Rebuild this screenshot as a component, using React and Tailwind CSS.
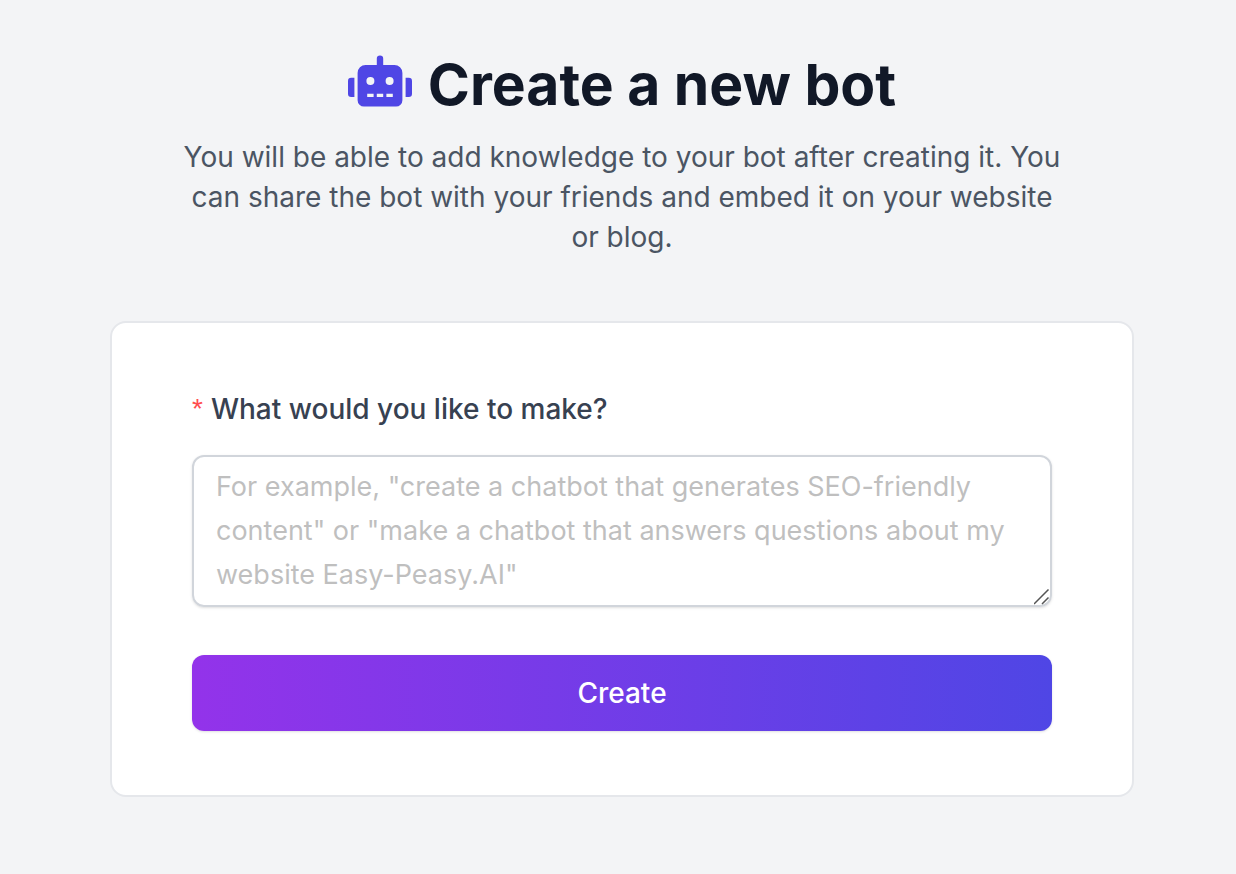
import { useState } from "react";
import { FaRobot } from "react-icons/fa";

const App = () => {
  const [prompt, setPrompt] = useState("");

  const handleSubmit = (e) => {
    e.preventDefault();
  };

  return (
    <div className="min-h-screen bg-gray-100 pt-[49px] pb-[77px] pl-[110px] pr-[102px] font-['Inter',sans-serif]">
      <header className="px-16 text-center">
        <h1 className="flex items-center justify-center gap-4 text-[57px] leading-[72px] font-bold text-[#111827]">
          <FaRobot className="mb-2 h-16 w-16 text-[#4f46e5]" />
          Create a new bot
        </h1>
        <p className="mt-4 text-[28px] leading-10 text-[#4b5563]">
          You will be able to add knowledge to your bot after creating it. You
          can share the bot with your friends and embed it on your website or
          blog.
        </p>
      </header>

      <form
        onSubmit={handleSubmit}
        className="mt-16 rounded-2xl border-2 border-[#e5e7eb] bg-white px-20 py-16"
      >
        <label
          htmlFor="prompt"
          className="flex gap-2 text-[28px] leading-[44px] font-medium text-[#374151]"
        >
          <span className="font-['Liberation_Sans',sans-serif] text-[#ff4d4f]">
            *
          </span>
          What would you like to make?
        </label>
        <div className="relative mt-6">
          <textarea
            id="prompt"
            rows={3}
            className="block w-full resize-y rounded-xl border-2 border-[#d1d5db] px-[22px] py-2 text-[27px] leading-[44px] text-[#374151] shadow-sm placeholder:text-[#bfbfbf] focus:outline-none [&::-webkit-resizer]:bg-transparent"
            value={prompt}
            onChange={(e) => setPrompt(e.target.value)}
            placeholder={
              'For example, "create a chatbot that generates SEO-friendly content" or "make a chatbot that answers questions about my website Easy-Peasy.AI"'
            }
          />
          {/* resize grip */}
          <svg
            className="pointer-events-none absolute right-0.5 bottom-0.5 h-4 w-4"
            viewBox="0 0 16 16"
            fill="none"
            stroke="#555"
            strokeWidth="1.5"
            aria-hidden="true"
          >
            <path d="M0 15 14.5 .5M8 15l6.5-6.5" />
          </svg>
        </div>
        <button
          type="submit"
          className="mt-12 block w-full rounded-xl bg-linear-to-r/srgb from-[#9333ea] to-[#4f46e5] py-[18px] text-[28px] leading-10 font-medium text-white shadow-sm"
        >
          Create
        </button>
      </form>
    </div>
  );
};

export default App;
